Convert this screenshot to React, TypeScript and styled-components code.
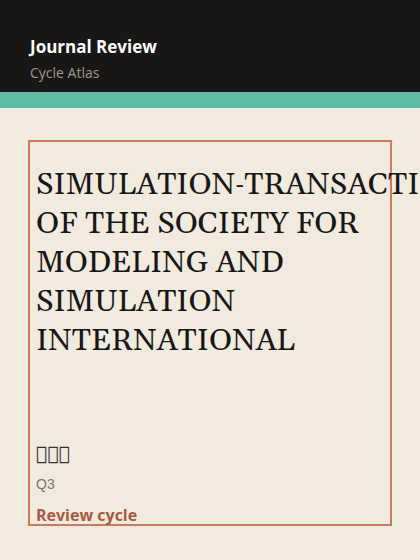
import styled, { createGlobalStyle } from "styled-components"

const Global = createGlobalStyle`
    html, body {
        margin:0;
        padding:0;
        background:#f1eadf;
    }
    body {
        font-family: "Open Sans", "Noto Sans", sans-serif;
    }
`
const Page = styled.div`
    width:420px;
    height:560px;
    display:flex;
    flex-direction: column;
    overflow:hidden;
`
const Header = styled.header`
    background:#181716;
    padding:35px 30px 0;
    height:92px;
    box-sizing:border-box;
    display:flex;
    flex-direction: column;
    gap:4px;
`
const Title = styled.h1`
    margin:0;
    color:#ffffff;
    font-size:17px;
    font-weight:700;
    line-height:24px;
`
const Sub = styled.div`
    color:#9c9893;
    font-size:14px;
    line-height:20px;
`
const Stripe = styled.div`
    height:16px;
    background:#5ebba6;
`
const Body = styled.main`
    flex:1;
    padding:32px 28px 34px;
    display:flex;
`
const Card = styled.section`
    flex:1;
    min-width:0;
    border:2px solid #cc7a5c;
    padding:24px 6px 0;
    display:flex;
    flex-direction: column;
    justify-content: space-between;
`
const Name = styled.h2`
    margin:0;
    font-family: Gelasio, "Liberation Serif", serif;
    font-weight:400;
    font-size:31px;
    line-height:39px;
    color:#181716;
`
const Meta = styled.div`
    display:flex;
    flex-direction: column;
`
const Native = styled.div`
    font-family: "DejaVu Sans", sans-serif;
    font-size:19px;
    line-height:24px;
    color:#33322f;
`
const Quarter = styled.div`
    font-family: "Liberation Sans", sans-serif;
    font-size:14px;
    line-height:20px;
    color:#7b7772;
    margin-top:9px;
`
const Link = styled.div`
    font-size:16px;
    font-weight:700;
    color:#a85a40;
    line-height:18px;
    margin-top:12px;
`

const App = () => {
    return <Page>
        <Global/>
        <Header>
            <Title>Journal Review</Title>
            <Sub>Cycle Atlas</Sub>
        </Header>
        <Stripe/>
        <Body>
            <Card>
                <Name>SIMULATION‑TRANSACTIONS OF THE SOCIETY FOR MODELING AND SIMULATION INTERNATIONAL</Name>
                <Meta>
                    <Native>{"\uE000\uE001\uE002"}</Native>
                    <Quarter>Q3</Quarter>
                    <Link>Review cycle</Link>
                </Meta>
            </Card>
        </Body>
    </Page>
}

export default App
